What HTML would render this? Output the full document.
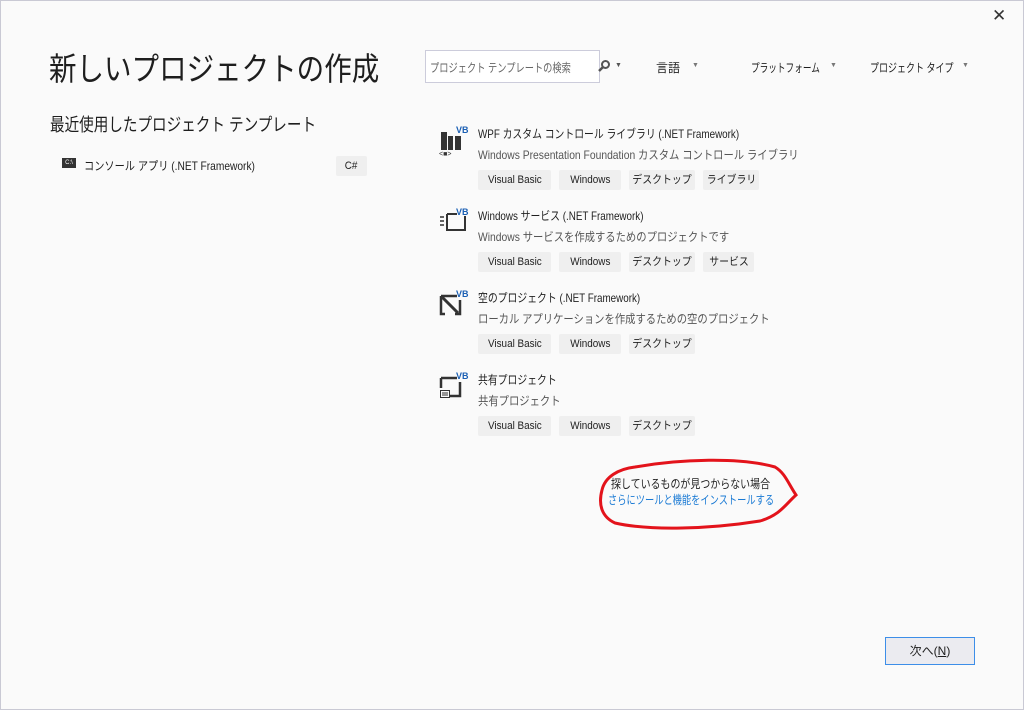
<!DOCTYPE html>
<html><head><meta charset="utf-8"><style>
*{margin:0;padding:0;box-sizing:border-box}
body{width:1024px;height:710px;background:#fafafa;font-family:"Liberation Sans","Noto Sans CJK JP",sans-serif;color:#1e1e1e;position:relative;overflow:hidden}
.frame{position:absolute;left:0;top:0;width:1024px;height:710px;border:1px solid #c9c9d4}
.a{position:absolute;white-space:nowrap;transform-origin:0 0}
.s{transform:scaleX(.82)}
.sd{transform:scaleX(.86)}
.tag{position:absolute;height:20px;background:#efefef;border-radius:2px;font-size:11px;line-height:20px;text-align:center;color:#1e1e1e;overflow:hidden}
.tag span{display:inline-block;transform:scaleX(.9)}
.t{font-size:12px;color:#1e1e1e}
.d{font-size:12px;color:#555}
</style></head><body>
<div class="frame"></div>
<div class="a" style="left:992px;top:6px;font-size:17px;color:#333">✕</div>
<div class="a" style="left:49px;top:44px;font-size:32px;color:#1e1e1e;transform:scaleX(.86)">新しいプロジェクトの作成</div>
<div class="a" style="left:50px;top:111px;font-size:18px;transform:scaleX(.81)">最近使用したプロジェクト テンプレート</div>
<div class="a" style="left:62px;top:158px;width:14px;height:10px;background:#333;color:#fff;font-size:6px;line-height:10px;text-align:center">C:\</div>
<div class="a" style="left:84px;top:157px;font-size:12px;transform:scaleX(.85)">コンソール アプリ (.NET Framework)</div>
<div class="tag" style="left:336px;top:156px;width:31px"><span>C#</span></div>

<div class="a" style="left:425px;top:50px;width:175px;height:33px;border:1px solid #ccccdb;background:#fff"></div>
<div class="a" style="left:430px;top:59px;font-size:12px;color:#666;transform:scaleX(.77)">プロジェクト テンプレートの検索</div>
<svg class="a" style="left:597px;top:59px" width="14" height="14"><circle cx="8.5" cy="5.5" r="3.5" stroke="#555" stroke-width="2" fill="none"/><path d="M6 8l-4 4" stroke="#555" stroke-width="2.5"/></svg>
<div class="a" style="left:615px;top:62px;font-size:7px;color:#555">▼</div>
<div class="a" style="left:656px;top:59px;font-size:12px">言語</div>
<div class="a" style="left:692px;top:62px;font-size:7px;color:#777">▼</div>
<div class="a" style="left:751px;top:59px;font-size:12px;transform:scaleX(.72)">プラットフォーム</div>
<div class="a" style="left:830px;top:62px;font-size:7px;color:#777">▼</div>
<div class="a" style="left:870px;top:59px;font-size:12px;transform:scaleX(.75)">プロジェクト タイプ</div>
<div class="a" style="left:962px;top:62px;font-size:7px;color:#777">▼</div>

<svg class="a" style="left:438px;top:124px" width="34" height="34"><rect x="3" y="8" width="6" height="18" fill="#333"/><rect x="10" y="12" width="5" height="14" fill="#333"/><rect x="17" y="12" width="6" height="14" fill="#333"/><text x="18" y="9" font-size="9" font-weight="bold" fill="#1a5fb4" font-family="Liberation Sans">VB</text><text x="1" y="32" font-size="7" fill="#333" font-family="Liberation Sans">&lt;■&gt;</text></svg>
<div class="a t s" style="left:478px;top:125px">WPF カスタム コントロール ライブラリ (.NET Framework)</div>
<div class="a d sd" style="left:478px;top:146px">Windows Presentation Foundation カスタム コントロール ライブラリ</div>
<div class="tag" style="left:478px;top:170px;width:73px"><span>Visual Basic</span></div><div class="tag" style="left:559px;top:170px;width:62px"><span>Windows</span></div><div class="tag" style="left:629px;top:170px;width:66px"><span>デスクトップ</span></div><div class="tag" style="left:703px;top:170px;width:56px"><span>ライブラリ</span></div>

<svg class="a" style="left:438px;top:206px" width="34" height="34"><path d="M9 8h10M9 8v16h18v-14" stroke="#333" stroke-width="2" fill="none"/><path d="M2 11h4M2 15h4M2 19h4" stroke="#333" stroke-width="1.5"/><text x="18" y="9" font-size="9" font-weight="bold" fill="#1a5fb4" font-family="Liberation Sans">VB</text></svg>
<div class="a t s" style="left:478px;top:207px">Windows サービス (.NET Framework)</div>
<div class="a d sd" style="left:478px;top:228px">Windows サービスを作成するためのプロジェクトです</div>
<div class="tag" style="left:478px;top:252px;width:73px"><span>Visual Basic</span></div><div class="tag" style="left:559px;top:252px;width:62px"><span>Windows</span></div><div class="tag" style="left:629px;top:252px;width:66px"><span>デスクトップ</span></div><div class="tag" style="left:703px;top:252px;width:51px"><span>サービス</span></div>

<svg class="a" style="left:438px;top:288px" width="34" height="34"><path d="M3 8h16M3 8v18h4M22 12v14h-5" stroke="#333" stroke-width="2.5" fill="none"/><path d="M4 9l16 16" stroke="#333" stroke-width="3"/><text x="18" y="9" font-size="9" font-weight="bold" fill="#1a5fb4" font-family="Liberation Sans">VB</text></svg>
<div class="a t s" style="left:478px;top:289px">空のプロジェクト (.NET Framework)</div>
<div class="a d sd" style="left:478px;top:310px">ローカル アプリケーションを作成するための空のプロジェクト</div>
<div class="tag" style="left:478px;top:334px;width:73px"><span>Visual Basic</span></div><div class="tag" style="left:559px;top:334px;width:62px"><span>Windows</span></div><div class="tag" style="left:629px;top:334px;width:66px"><span>デスクトップ</span></div>

<svg class="a" style="left:438px;top:370px" width="34" height="34"><path d="M3 8h16M3 8v10M22 12v14h-10" stroke="#333" stroke-width="2.5" fill="none"/><rect x="2.5" y="20.5" width="9" height="7" stroke="#333" fill="none"/><path d="M4 23h6M4 25h6" stroke="#333"/><text x="18" y="9" font-size="9" font-weight="bold" fill="#1a5fb4" font-family="Liberation Sans">VB</text></svg>
<div class="a t s" style="left:478px;top:371px">共有プロジェクト</div>
<div class="a d sd" style="left:478px;top:392px">共有プロジェクト</div>
<div class="tag" style="left:478px;top:416px;width:73px"><span>Visual Basic</span></div><div class="tag" style="left:559px;top:416px;width:62px"><span>Windows</span></div><div class="tag" style="left:629px;top:416px;width:66px"><span>デスクトップ</span></div>

<svg class="a" style="left:590px;top:455px" width="210" height="80"><path d="M45 12 C90 4 150 2 185 12 C195 18 198 28 206 40 C195 50 190 60 170 66 C120 74 60 76 25 68 C12 62 8 50 12 35 C15 22 28 14 45 12 Z" stroke="#e3131b" stroke-width="3" fill="none"/></svg>
<div class="a" style="left:611px;top:475px;font-size:12px;color:#1e1e1e;transform:scaleX(.83)">探しているものが見つからない場合</div>
<div class="a" style="left:608px;top:491px;font-size:12px;color:#1a7ad4;transform:scaleX(.77)">さらにツールと機能をインストールする</div>

<div class="a" style="left:885px;top:637px;width:90px;height:28px;border:1px solid #3d8ee8;background:#ebebf0;font-size:12px;text-align:center;line-height:26px">次へ(<u>N</u>)</div>
</body></html>
